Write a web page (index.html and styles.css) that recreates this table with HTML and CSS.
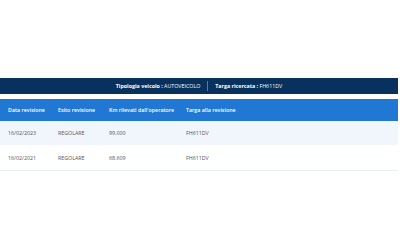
FILE: index.html
```html
<!DOCTYPE html>
<html lang="it">
<head>
<meta charset="utf-8">
<link rel="stylesheet" href="styles.css">
</head>
<body>
<div class="page">
  <div class="info-bar">
    <span class="info"><b>Tipologia veicolo :</b> AUTOVEICOLO</span>
    <span class="sep"></span>
    <span class="info"><b>Targa ricercata :</b> FH611DV</span>
  </div>
  <div class="table">
    <div class="row head">
      <div>Data revisione</div>
      <div>Esito revisione</div>
      <div>Km rilevati dall'operatore</div>
      <div>Targa alla revisione</div>
    </div>
    <div class="row odd">
      <div>16/02/2023</div>
      <div>REGOLARE</div>
      <div>99.000</div>
      <div>FH611DV</div>
    </div>
    <div class="row even">
      <div>16/02/2021</div>
      <div>REGOLARE</div>
      <div>68.609</div>
      <div>FH611DV</div>
    </div>
  </div>
</div>
</body>
</html>
```

FILE: styles.css
```css
html, body {
  margin: 0;
  padding: 0;
  background: #ffffff;
}
body {
  font-family: "Open Sans", "Noto Sans", sans-serif;
  font-size: 5.3px;
}
.page {
  padding-top: 78px;
  width: 398px;
}
.info-bar {
  height: 16px;
  background: #08325d;
  color: #ffffff;
  display: flex;
  align-items: center;
  justify-content: center;
  font-size: 5.3px;
}
.info b {
  font-weight: 700;
}
.sep {
  width: 1px;
  height: 10px;
  background: #5d7897;
  margin: 0 7px;
}
.table {
  margin-top: 5px;
  border-bottom: 1px solid #e8eef4;
}
.row {
  display: grid;
  grid-template-columns: 50px 51px 77px 1fr;
  align-items: center;
  padding-left: 8px;
}
.head {
  height: 22px;
  background: #2178d4;
  color: #ffffff;
  font-weight: 600;
}
.odd {
  height: 24px;
  background: #f1f6fd;
  color: #4c5560;
}
.even {
  height: 25px;
  background: #ffffff;
  color: #4c5560;
}
```
